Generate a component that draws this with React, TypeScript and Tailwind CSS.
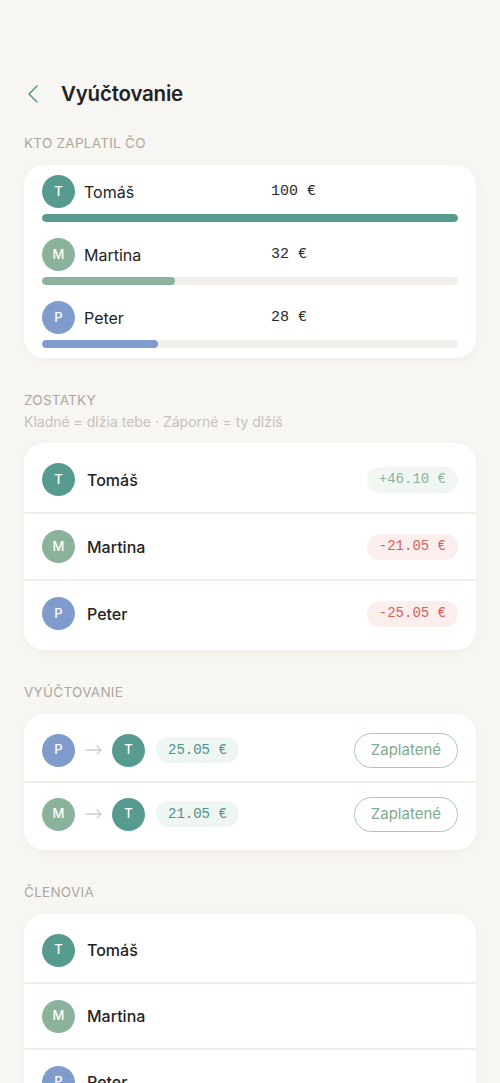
import { ChevronLeft } from 'lucide-react';

type Person = { name: string; initial: string; color: string };

const tomas: Person = { name: 'Tomáš', initial: 'T', color: 'bg-[#579a8e]' };
const martina: Person = { name: 'Martina', initial: 'M', color: 'bg-[#8bb39c]' };
const peter: Person = { name: 'Peter', initial: 'P', color: 'bg-[#7f9ccc]' };

const paid = [
  { person: tomas, amount: '100 €', bar: 'bg-[#579a8e]', width: 'w-full' },
  { person: martina, amount: '32 €', bar: 'bg-[#8bb39c]', width: 'w-[32%]' },
  { person: peter, amount: '28 €', bar: 'bg-[#7f9ccc]', width: 'w-[28%]' },
];

const balances = [
  { person: tomas, amount: '+46.10 €', positive: true },
  { person: martina, amount: '-21.05 €', positive: false },
  { person: peter, amount: '-25.05 €', positive: false },
];

const settlements = [
  { from: peter, to: tomas, amount: '25.05 €' },
  { from: martina, to: tomas, amount: '21.05 €' },
];

const mono = { fontFamily: '"Liberation Mono", "DejaVu Sans Mono", monospace' };

function Avatar({ person }: { person: Person }) {
  return (
    <div className={`w-[33px] h-[33px] rounded-full ${person.color} flex items-center justify-center shrink-0`}>
      <span className="text-white text-[13px] font-medium">{person.initial}</span>
    </div>
  );
}

function SectionLabel({ children }: { children: string }) {
  return <h2 className="text-[13.5px] leading-[21px] tracking-[0.02em] text-[#aea69c] uppercase">{children}</h2>;
}

const card = 'bg-white rounded-[20px] shadow-[0_2px_10px_rgba(120,110,90,0.06)]';

export default function App() {
  return (
    <div
      className="min-h-[1083px] bg-[#f8f6f2] text-[#232323] px-6 pt-[80px] pb-10"
      style={{ fontFamily: 'Inter, "Noto Sans", sans-serif' }}
    >
      {/* Header */}
      <div className="flex items-center gap-[12px] ml-[-7px] h-[28px]">
        <ChevronLeft className="w-[32px] h-[32px] text-[#579a8e]" strokeWidth={1.2} />
        <h1 className="text-[20.5px] font-semibold tracking-[-0.01em]">Vyúčtovanie</h1>
      </div>

      {/* Who paid what */}
      <div className="mt-[25px]">
        <SectionLabel>Kto zaplatil čo</SectionLabel>
        <div className={`${card} mt-[11px] px-[18px] pt-[10px] pb-[10px] flex flex-col gap-[16px]`}>
          {paid.map((p) => (
            <div key={p.person.name} className="flex flex-col gap-[6px]">
              <div className="flex items-center">
                <Avatar person={p.person} />
                <span className="ml-[9px] w-[187px] text-[16px]">{p.person.name}</span>
                <span className="text-[15px] text-[#2a2a2a] pt-[2px]" style={mono}>{p.amount}</span>
              </div>
              <div className="h-[8px] rounded-full bg-[#f3f0eb] overflow-hidden">
                <div className={`h-full rounded-full ${p.bar} ${p.width}`} />
              </div>
            </div>
          ))}
        </div>
      </div>

      {/* Balances */}
      <div className="mt-[32px]">
        <SectionLabel>Zostatky</SectionLabel>
        <p className="text-[14px] leading-[21px] text-[#c8c1b8]">Kladné = dlžia tebe · Záporné = ty dlžíš</p>
        <div className={`${card} mt-[11px] py-[4px] flex flex-col`}>
          {balances.map((b, i) => (
            <div
              key={b.person.name}
              className={`flex items-center h-[65px] px-[18px] ${i > 0 ? 'border-t-2 border-[#f1eee9] h-[67px]' : ''}`}
            >
              <Avatar person={b.person} />
              <span className="ml-[12px] text-[16px] font-medium flex-1">{b.person.name}</span>
              <span
                className={`h-[26px] px-[12px] rounded-full flex items-center text-[14px] ${
                  b.positive ? 'bg-[#f2f6f3] text-[#8bb39c]' : 'bg-[#fbeeed] text-[#d4625a]'
                }`}
                style={mono}
              >
                {b.amount}
              </span>
            </div>
          ))}
        </div>
      </div>

      {/* Settlements */}
      <div className="mt-[32px]">
        <SectionLabel>Vyúčtovanie</SectionLabel>
        <div className={`${card} mt-[11px] py-[5px] flex flex-col`}>
          {settlements.map((s, i) => (
            <div
              key={s.from.name}
              className={`flex items-center h-[62px] px-[18px] ${i > 0 ? 'border-t-2 border-[#f1eee9] h-[64px]' : ''}`}
            >
              <Avatar person={s.from} />
              <svg className="mx-[10px] shrink-0" width="17" height="10" viewBox="0 0 17 10" fill="none">
                <path d="M0.5 5H16M12 1L16 5L12 9" stroke="#d3cdc5" strokeWidth="1.3" strokeLinecap="round" strokeLinejoin="round" />
              </svg>
              <Avatar person={s.to} />
              <span
                className="ml-[11px] h-[26px] px-[12px] rounded-full bg-[#eef5f3] text-[#4f9488] text-[14px] flex items-center"
                style={mono}
              >
                {s.amount}
              </span>
              <button className="ml-auto h-[35px] px-[16px] rounded-full border-[1.5px] border-[#a4cbb1] text-[#80ad90] text-[15px]">
                Zaplatené
              </button>
            </div>
          ))}
        </div>
      </div>

      {/* Members */}
      <div className="mt-[32px]">
        <SectionLabel>Členovia</SectionLabel>
        <div className={`${card} mt-[11px] py-[4px] flex flex-col`}>
          {[tomas, martina, peter].map((p, i) => (
            <div
              key={p.name}
              className={`flex items-center h-[64px] px-[18px] ${i > 0 ? 'border-t-2 border-[#f1eee9] h-[66px]' : ''}`}
            >
              <Avatar person={p} />
              <span className="ml-[12px] text-[16px] font-medium">{p.name}</span>
            </div>
          ))}
        </div>
      </div>
    </div>
  );
}
